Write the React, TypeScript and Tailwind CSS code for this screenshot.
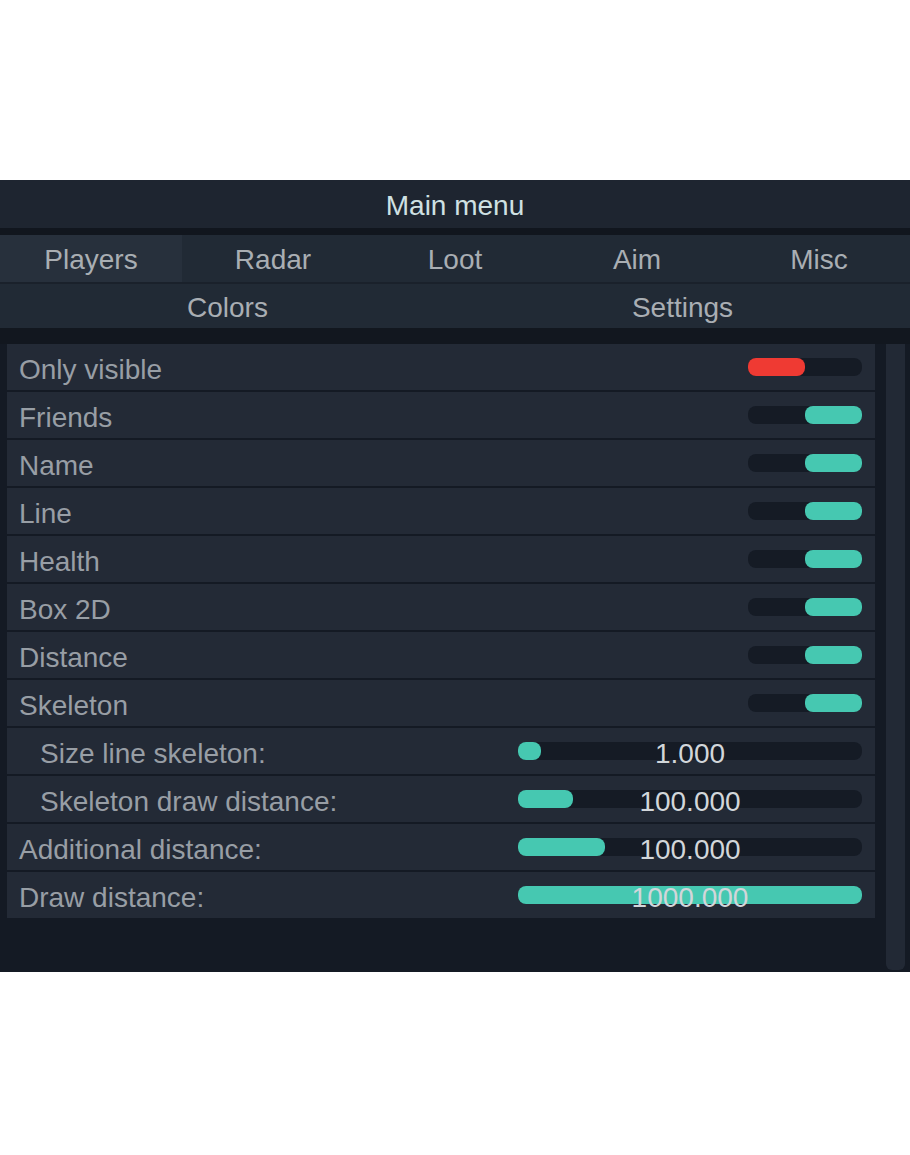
import React from 'react';

type Row =
  | { kind: 'toggle'; label: string; on: boolean; indent?: boolean }
  | { kind: 'slider'; label: string; value: string; fill: number; indent?: boolean };

const rows: Row[] = [
  { kind: 'toggle', label: 'Only visible', on: false },
  { kind: 'toggle', label: 'Friends', on: true },
  { kind: 'toggle', label: 'Name', on: true },
  { kind: 'toggle', label: 'Line', on: true },
  { kind: 'toggle', label: 'Health', on: true },
  { kind: 'toggle', label: 'Box 2D', on: true },
  { kind: 'toggle', label: 'Distance', on: true },
  { kind: 'toggle', label: 'Skeleton', on: true },
  { kind: 'slider', label: 'Size line skeleton:', value: '1.000', fill: 23, indent: true },
  { kind: 'slider', label: 'Skeleton draw distance:', value: '100.000', fill: 55, indent: true },
  { kind: 'slider', label: 'Additional distance:', value: '100.000', fill: 87 },
  { kind: 'slider', label: 'Draw distance:', value: '1000.000', fill: 344 },
];

const tabs = ['Players', 'Radar', 'Loot', 'Aim', 'Misc'];

const Toggle: React.FC<{ on: boolean }> = ({ on }) => (
  <div className={`w-[114px] h-[18px] rounded-[8px] bg-[#151b25] flex ${on ? 'justify-end' : 'justify-start'}`}>
    <div className={`w-[57px] h-[18px] rounded-[8px] ${on ? 'bg-[#46c8b1]' : 'bg-[#ef3a33]'}`} />
  </div>
);

const Slider: React.FC<{ value: string; fill: number }> = ({ value, fill }) => (
  <div className="relative w-[344px] h-[18px] rounded-[8px] bg-[#151b25]">
    <div className="h-[18px] rounded-[8px] bg-[#46c8b1]" style={{ width: fill }} />
    <div className="absolute inset-0 flex items-center justify-center text-[28px] leading-none text-[#d2d6da] pt-[6px]">
      {value}
    </div>
  </div>
);

export default function App() {
  return (
    <div className="w-[910px] h-[1155px] bg-white pt-[180px]" style={{ fontFamily: '"Liberation Sans", Arial, sans-serif' }}>
      <div className="h-[792px] bg-[#141a24] flex flex-col">
        {/* Title */}
        <div className="h-[48px] bg-[#1e2530] flex items-center justify-center text-[28px] text-[#cfe1e3] pt-[3px]">
          Main menu
        </div>
        <div className="h-[7px] bg-[#11161e]" />

        {/* Tabs */}
        <div className="h-[47px] grid grid-cols-5 bg-[#212a35] text-[28px] text-[#a9aeb3]">
          {tabs.map((t, i) => (
            <div key={t} className={`flex items-center justify-center pt-[3px] ${i === 0 ? 'bg-[#27303c]' : ''}`}>
              {t}
            </div>
          ))}
        </div>
        <div className="h-[2px] bg-[#1a212b]" />
        <div className="h-[44px] grid grid-cols-2 bg-[#212a35] text-[28px] text-[#a9aeb3]">
          <div className="flex items-center justify-center pt-[3px]">Colors</div>
          <div className="flex items-center justify-center pt-[3px]">Settings</div>
        </div>
        <div className="h-[16px] bg-[#12171f]" />

        {/* Body */}
        <div className="flex flex-1 pl-[7px]">
          <div className="w-[868px] flex flex-col gap-[2px]">
            {rows.map(r => (
              <div
                key={r.label}
                className={`h-[46px] bg-[#232a36] flex items-center justify-between pr-[13px] ${r.indent ? 'pl-[33px]' : 'pl-[12px]'}`}
              >
                <span className="text-[28px] text-[#989ea5] leading-none pt-[5px]">{r.label}</span>
                {r.kind === 'toggle' ? <Toggle on={r.on} /> : <Slider value={r.value} fill={r.fill} />}
              </div>
            ))}
          </div>
          <div className="w-[11px]" />
          <div className="w-[19px] mb-[2px] bg-[#222935] rounded-b-[6px]" />
        </div>
      </div>
    </div>
  );
}
